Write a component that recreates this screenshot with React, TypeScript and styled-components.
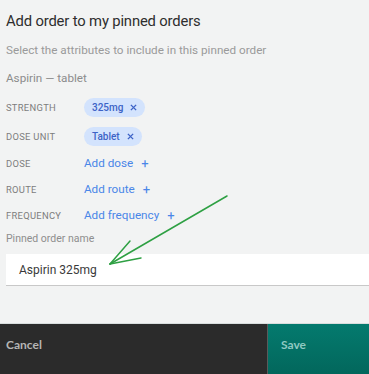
import styled, { createGlobalStyle } from 'styled-components';

const GlobalStyle = createGlobalStyle`
  html, body {
    margin: 0;
    padding: 0;
    background: #f2f3f3;
  }
  body {
    font-family: Roboto, 'Noto Sans', sans-serif;
  }
`;

const Page = styled.div`
  position: relative;
  width: 369px;
  height: 374px;
  overflow: hidden;
  background: #f2f3f3;
  display: flex;
  flex-direction: column;
`;

const Body = styled.div`
  flex: 1;
  padding: 9px 0 0 6px;
  display: flex;
  flex-direction: column;
`;

const Title = styled.h1`
  margin: 0;
  font-size: 14.8px;
  font-weight: 400;
  letter-spacing: -0.15px;
  color: #2e2e2e;
  line-height: 24px;
`;

const Subtitle = styled.p`
  margin: 9px 0 0;
  font-size: 11.7px;
  color: #9a9a9a;
  line-height: 16px;
`;

const DrugName = styled.p`
  margin: 12px 0 0;
  font-size: 11.7px;
  color: #8c8c8c;
  line-height: 16px;
`;

const AttrList = styled.div`
  margin-top: 10px;
  display: grid;
  grid-template-columns: 78px auto;
  grid-template-rows: 22px 22px 19px 19px 19px;
  row-gap: 7px;
  align-items: center;
  justify-content: start;
`;

const AttrLabel = styled.div`
  font-size: 9.4px;
  letter-spacing: 0.3px;
  color: #7d7d7d;
  text-transform: uppercase;
  line-height: 19px;
`;

const Chip = styled.span`
  display: inline-flex;
  align-items: center;
  gap: 7px;
  height: 19px;
  padding: 0 8px;
  border-radius: 10px;
  background: #d3e3fd;
  color: #3d63c7;
  font-size: 10px;
  font-weight: 500;
  justify-self: start;
`;

const ClearIcon = styled.svg`
  width: 7px;
  height: 7px;
  stroke: #3d63c7;
  stroke-width: 1.6;
`;

const AddLink = styled.span`
  display: inline-flex;
  align-items: center;
  gap: 8px;
  font-size: 11.7px;
  color: #4a86e8;
  line-height: 19px;
`;

const Plus = styled.span`
  font-size: 13px;
  color: #4a86e8;
`;

const FieldLabel = styled.label`
  margin-top: 7px;
  font-size: 10.5px;
  color: #8e8e8e;
  line-height: 14px;
`;

const Input = styled.div`
  margin-top: 8px;
  height: 31px;
  background: #ffffff;
  border-bottom: 1px solid #c8c8c8;
  padding-left: 13px;
  display: flex;
  align-items: center;
  font-size: 12px;
  color: #3a3a3a;
`;

const Footer = styled.div`
  height: 50px;
  display: grid;
  grid-template-columns: 267px 1fr;
  border-top: 1px solid #d9dede;
`;

const FooterButton = styled.button<{ primary?: boolean }>`
  border: none;
  margin: 0;
  padding: 0 0 10px ${({ primary }) => (primary ? '13px' : '6px')};
  text-align: left;
  font-family: Lato, 'Noto Sans', sans-serif;
  font-weight: 700;
  font-size: 12px;
  color: ${({ primary }) => (primary ? '#8fc9c2' : '#b5b5b5')};
  background: ${({ primary }) =>
    primary ? 'linear-gradient(180deg, #047a6e 0%, #02675c 100%)' : '#2b2b2b'};
  border-left: ${({ primary }) => (primary ? '1px solid #5a5a5a' : 'none')};
`;

const Arrow = styled.svg`
  position: absolute;
  left: 0;
  top: 0;
  width: 369px;
  height: 374px;
  pointer-events: none;
`;

const XMark = () => (
  <ClearIcon viewBox="0 0 8 8" fill="none">
    <path d="M1 1L7 7M7 1L1 7" />
  </ClearIcon>
);

const App = () => (
  <Page>
    <GlobalStyle />
    <Body>
      <Title>Add order to my pinned orders</Title>
      <Subtitle>Select the attributes to include in this pinned order</Subtitle>
      <DrugName>Aspirin — tablet</DrugName>
      <AttrList>
        <AttrLabel>Strength</AttrLabel>
        <Chip>
          325mg <XMark />
        </Chip>
        <AttrLabel>Dose unit</AttrLabel>
        <Chip>
          Tablet <XMark />
        </Chip>
        <AttrLabel>Dose</AttrLabel>
        <AddLink>
          Add dose <Plus>+</Plus>
        </AddLink>
        <AttrLabel>Route</AttrLabel>
        <AddLink>
          Add route <Plus>+</Plus>
        </AddLink>
        <AttrLabel>Frequency</AttrLabel>
        <AddLink>
          Add frequency <Plus>+</Plus>
        </AddLink>
      </AttrList>
      <FieldLabel>Pinned order name</FieldLabel>
      <Input>Aspirin 325mg</Input>
    </Body>
    <Footer>
      <FooterButton>Cancel</FooterButton>
      <FooterButton primary>Save</FooterButton>
    </Footer>
    <Arrow viewBox="0 0 369 374" fill="none">
      <g stroke="#2ea043" strokeWidth="1.5" strokeLinecap="round">
        <path d="M227 196L110 264" />
        <path d="M110 264L130 241" />
        <path d="M110 264L141 258" />
      </g>
    </Arrow>
  </Page>
);

export default App;
